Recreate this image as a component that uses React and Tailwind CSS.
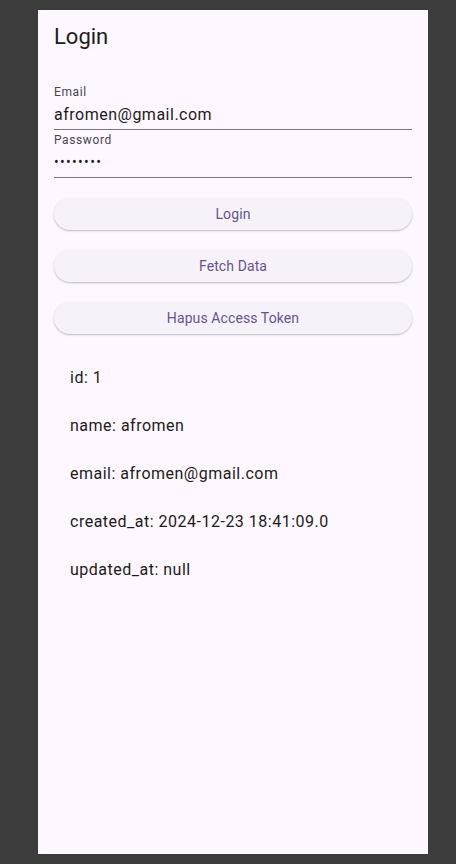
import React from "react";

const user = [
  ["id", "1"],
  ["name", "afromen"],
  ["email", "afromen@gmail.com"],
  ["created_at", "2024-12-23 18:41:09.0"],
  ["updated_at", "null"],
];

function Field({ label, value, dots }) {
  return (
    <div className="h-[48px] flex flex-col border-b border-[#79747e]">
      <div className="text-[12px] leading-[16px] text-[#49454f] mt-[2px] tracking-[0.6px]">{label}</div>
      <div
        className={
          dots
            ? "text-[14px] leading-[24px] text-[#1d1b20] tracking-[1.3px] mt-[2px]"
            : "text-[16px] leading-[24px] text-[#1d1b20] mt-[3px] tracking-[0.5px]"
        }
      >
        {value}
      </div>
    </div>
  );
}

function Btn({ children }) {
  return (
    <button className="w-full h-[32px] rounded-full bg-[#f7f2fa] text-[#65558f] text-[14px] tracking-[0.1px] shadow-[0_1px_2px_rgba(0,0,0,0.25)]">
      {children}
    </button>
  );
}

export default function App() {
  return (
    <div
      className="w-[456px] h-[864px] bg-[#3c3c3c] pt-[10px] pl-[38px]"
      style={{ fontFamily: "Roboto, 'Liberation Sans', sans-serif" }}
    >
      <div className="w-[390px] h-[844px] bg-[#fef7ff]">
        {/* App bar */}
        <div className="h-[56px] px-4 pb-[4px] flex items-center text-[22px] text-[#1d1b20]">Login</div>

        <div className="px-4 pt-4">
          <Field label="Email" value="afromen@gmail.com" />
          <Field label="Password" value="••••••••" dots />

          <div className="mt-[20px] flex flex-col gap-[20px]">
            <Btn>Login</Btn>
            <Btn>Fetch Data</Btn>
            <Btn>Hapus Access Token</Btn>
          </div>

          <div className="mt-[20px] flex flex-col">
            {user.map(([k, v]) => (
              <div key={k} className="h-[48px] px-4 flex items-center text-[16px] text-[#1d1b20] tracking-[0.5px]">
                {k}: {v}
              </div>
            ))}
          </div>
        </div>
      </div>
    </div>
  );
}
